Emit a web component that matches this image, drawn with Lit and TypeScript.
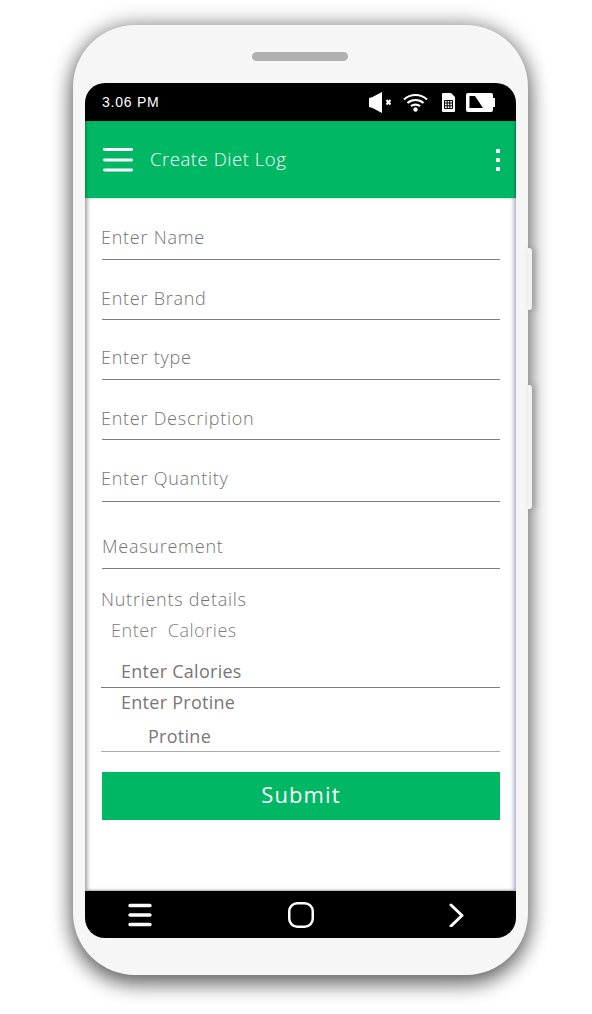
import { LitElement, html, css } from "lit";
import { customElement } from "lit/decorators.js";

const fields = ["Enter Name", "Enter Brand", "Enter type", "Enter Description", "Enter Quantity"];

@customElement("app-root")
export class AppRoot extends LitElement {
  static styles = css`
    :host { display: block; isolation: isolate; width: 592px; height: 1014px; padding: 25px 0 0 73px; box-sizing: border-box; background: #fff; overflow: hidden; font-family: "Open Sans", "Noto Sans", sans-serif; }
    .phone { position: relative; width: 455px; height: 950px; box-sizing: border-box; padding: 27px 12px 37px; background: #f6f6f6; border-radius: 62px; box-shadow: 0 10px 20px rgba(0,0,0,.45), 0 0 22px rgba(0,0,0,.42); display: flex; flex-direction: column; }
    .btn { position: absolute; left: 455px; width: 4px; background: #f3f3f3; border-radius: 0 3px 3px 0; box-shadow: 3px 0 6px rgba(0,0,0,.25); }
    .btn.a { top: 223px; height: 62px; }
    .btn.b { top: 360px; height: 124px; }
    .speaker { align-self: center; width: 96px; height: 9px; border-radius: 5px; background: #b0b0b0; margin: 0 2px 22px 0; flex: none; }
    .screen { flex: 1; display: flex; flex-direction: column; border-radius: 20px; overflow: hidden; background: #fff; }
    .status { height: 38px; background: #000; color: #fff; display: flex; align-items: center; padding: 0 21px 0 17px; flex: none; }
    .time { font-family: "Liberation Sans", sans-serif; font-size: 14px; letter-spacing: .75px; flex: 1; }
    .status svg { display: block; }
    .icons { display: flex; align-items: center; }
    .i-wifi { margin-left: 12px; }
    .i-sim { margin-left: 14px; }
    .i-bat { margin-left: 11px; }
    .bar { height: 77px; background: #00b763; color: #fff; display: flex; align-items: center; padding: 0 17px 0 18px; flex: none; box-shadow: inset 3px 0 3px -2px rgba(0,0,0,.35), inset -3px 0 3px -2px rgba(0,0,0,.35); }
    .title { font-size: 18.5px; font-weight: 300; flex: 1; margin: -2px 0 0 17px; letter-spacing: .55px; }
    .bar .dots { margin-right: -1px; }
    .content { flex: 1; display: flex; flex-direction: column; box-shadow: inset 4px 0 4px -2px rgba(0,0,0,.4), inset -4px 0 4px -2px rgba(60,70,120,.45); padding: 0 16px; color: #737373; font-size: 18px; font-weight: 300; letter-spacing: .75px; }
    .field { height: 60px; box-sizing: border-box; margin-left: 1px; text-indent: -1px; border-bottom: 1px solid #7d7d7d; display: flex; align-items: flex-end; padding-bottom: 8px; line-height: 25px; flex: none; }
    .field:first-child { height: 62px; padding-bottom: 9px; }
    .field:nth-child(3) { padding-bottom: 9px; }
    .field:nth-child(5) { height: 62px; padding-bottom: 10px; }
    .measure { height: 67px; text-indent: 0; padding-bottom: 9px; }
    .nutri { margin-top: 18px; line-height: 25px; }
    .sub { margin: 6px 0 0 10px; line-height: 25px; color: #808080; letter-spacing: .55px; }
    .in { box-sizing: border-box; border-bottom: 1px solid #7d7d7d; padding-left: 20px; line-height: 25px; font-weight: 400; color: #7a7676; letter-spacing: .27px; }
    .in.one { margin-top: 16px; height: 29px; }
    .lab { padding-left: 20px; line-height: 25px; margin-top: 2px; font-weight: 400; color: #7a7676; letter-spacing: .27px; }
    .in.two { padding-left: 47px; height: 37px; padding-top: 9px; border-bottom-color: #aaa; }
    .submit { margin: 20px 0 0 1px; height: 48px; width: 398px; border: 0; background: #00b763; color: #fff; font: 500 22px "Open Sans", sans-serif; letter-spacing: 1.1px; padding: 0 0 4px; }
    .nav { height: 48px; background: #000; flex: none; display: flex; align-items: center; border-top: 1px solid #bbb; box-sizing: border-box; padding: 0 0 0 43px; }
    .nav .home { margin-left: 136px; }
    .nav .next { margin-left: 135px; }
  `;

  render() {
    return html`
      <div class="phone">
        <div class="btn a"></div><div class="btn b"></div>
        <div class="speaker"></div>
        <div class="screen">
          <div class="status">
            <span class="time">3.06 PM</span>
            <div class="icons">
              <svg width="22" height="21" viewBox="0 0 22 21" fill="#fff">
                <path d="M0 6 3 5.200 13 0V21L3 15.800 0 15Z" /><path d="M17.500 8 21.500 12.500M21.500 8 17.500 12.500" stroke="#fff" stroke-width="2" />
              </svg>
              <svg class="i-wifi" width="25" height="19" viewBox="0 0 25 19" fill="none" stroke="#fff" stroke-width="2.200">
                <path d="M1 6.500C7.500 .5 17.500 .5 24 6.500M4.500 10C9 6 16 6 20.500 10M8 13.200C10.500 11.200 14.500 11.200 17 13.200" /><circle cx="12.500" cy="16.500" r="2.200" fill="#fff" stroke="none" />
              </svg>
              <svg class="i-sim" width="13" height="19" viewBox="0 0 13 19">
                <path d="M1 0H9L13 4V18a1 1 0 0 1-1 1H1a1 1 0 0 1-1-1V1a1 1 0 0 1 1-1Z" fill="#fff" />
                <path d="M2.500 7.500H10.500V15.500H2.500ZM2.500 10H10.500M2.500 12.800H10.500M5.200 7.500V15.500M7.800 7.500V15.500" fill="none" stroke="#000" stroke-width="1" />
              </svg>
              <svg class="i-bat" width="29" height="19" viewBox="0 0 29 19">
                <path d="M2 0H25a2 2 0 0 1 2 2V5H29V14H27V17a2 2 0 0 1-2 2H2a2 2 0 0 1-2-2V2a2 2 0 0 1 2-2Z" fill="#fff" />
                <path d="M3.500 3H9L17 15H3.500Z" fill="#000" />
              </svg>
            </div>
          </div>
          <div class="bar">
            <svg width="30" height="24" viewBox="0 0 30 24" stroke="#fff" stroke-width="2.800" stroke-linecap="round">
              <path d="M1.400 1.500H28.600M1.400 12H28.600M1.400 22H28.600" />
            </svg>
            <span class="title">Create Diet Log</span>
            <svg class="dots" width="4" height="22" viewBox="0 0 4 22" fill="#fff">
              <rect width="4" height="4" y="0" rx=".6" /><rect width="4" height="4" y="9" rx=".6" /><rect width="4" height="4" y="18" rx=".6" />
            </svg>
          </div>
          <div class="content">
            ${fields.map((f) => html`<div class="field">${f}</div>`)}
            <div class="field measure">Measurement</div>
            <div class="nutri">Nutrients details</div>
            <div class="sub">Enter&nbsp; Calories</div>
            <div class="in one">Enter Calories</div>
            <div class="lab">Enter Protine</div>
            <div class="in two">Protine</div>
            <button class="submit">Submit</button>
          </div>
          <div class="nav">
            <svg width="24" height="24" viewBox="0 0 24 24" stroke="#fff" stroke-width="3.400" stroke-linecap="round">
              <path d="M2 2.500H22M2 12H22M2 21.500H22" />
            </svg>
            <svg class="home" width="26" height="26" viewBox="0 0 26 26" fill="none" stroke="#fff" stroke-width="2.500">
              <rect x="1.250" y="1.250" width="23.500" height="23.500" rx="8" />
            </svg>
            <svg class="next" width="16" height="24" viewBox="0 0 16 24" fill="none" stroke="#fff" stroke-width="3" stroke-linecap="round" stroke-linejoin="round">
              <path d="M2 2 13 12.500 2 23" />
            </svg>
          </div>
        </div>
      </div>
    `;
  }
}
